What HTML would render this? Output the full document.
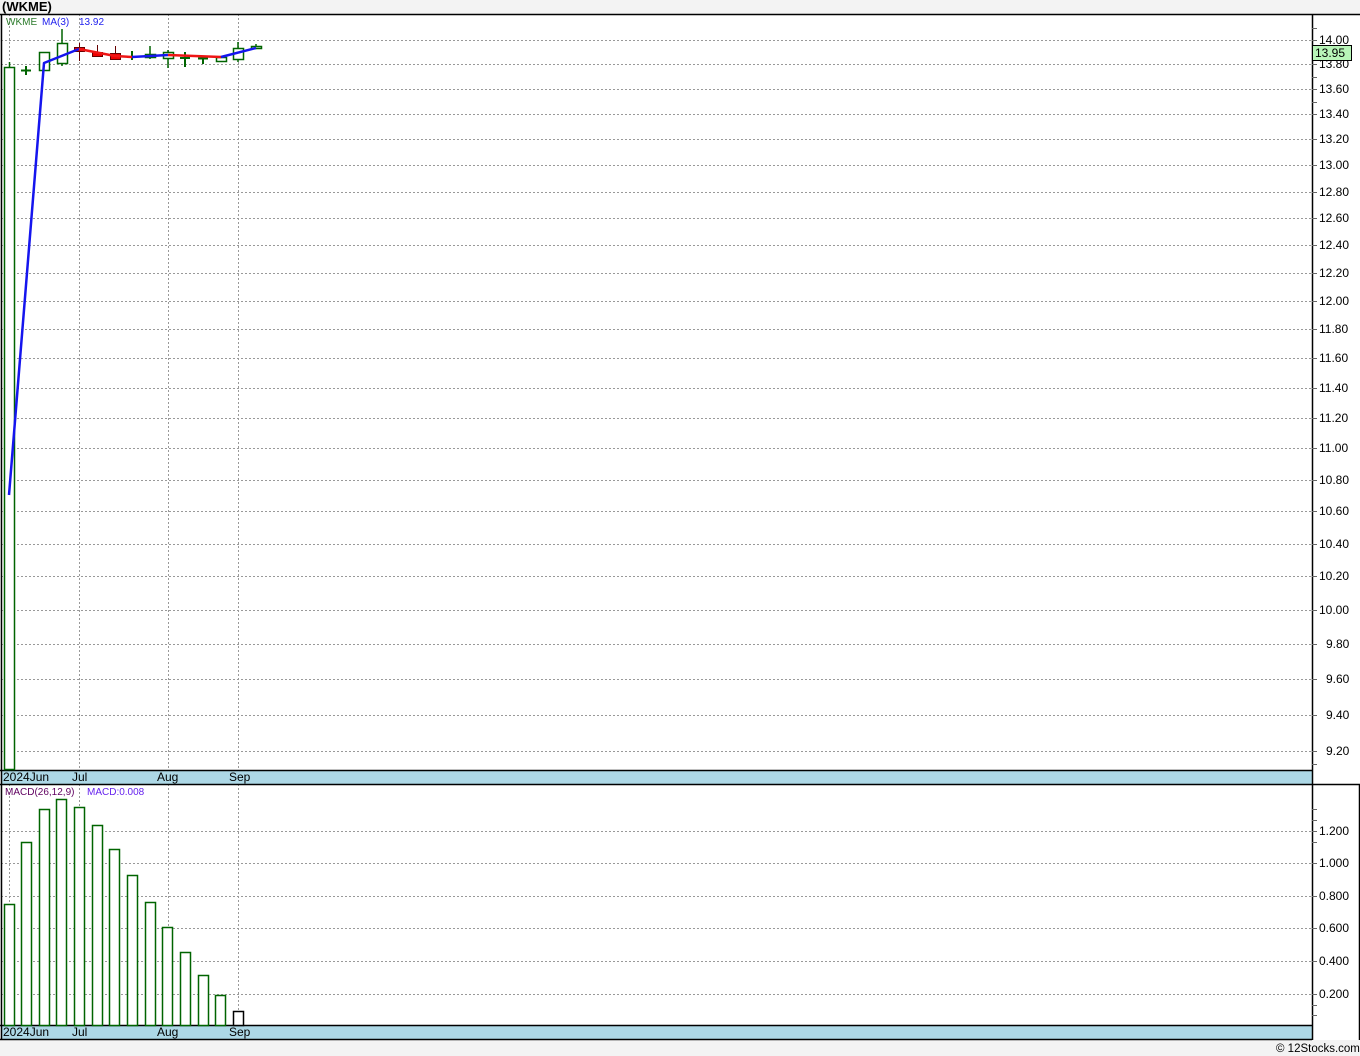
<!DOCTYPE html>
<html><head><meta charset="utf-8"><style>
html,body{margin:0;padding:0;background:#f3f3f3;width:1360px;height:1056px;overflow:hidden}
svg{display:block;font-family:"Liberation Sans",sans-serif}
</style></head><body>
<svg width="1360" height="1056" viewBox="0 0 1360 1056" xmlns="http://www.w3.org/2000/svg">
<rect x="0" y="0" width="1360" height="1056" fill="#f3f3f3"/>
<text x="2" y="11" font-size="13" font-weight="bold" fill="#000">(WKME)</text>
<rect x="1" y="14" width="1311" height="1025" fill="#fff"/>
<rect x="1312" y="14" width="48" height="1026" fill="#fff"/>
<g stroke="#999" stroke-width="1" stroke-dasharray="2,2" fill="none">
<path d="M1 40.5H1312M1 64.5H1312M1 89.5H1312M1 114.5H1312M1 139.5H1312M1 165.5H1312M1 192.5H1312M1 218.5H1312M1 245.5H1312M1 273.5H1312M1 301.5H1312M1 329.5H1312M1 358.5H1312M1 388.5H1312M1 418.5H1312M1 448.5H1312M1 480.5H1312M1 511.5H1312M1 544.5H1312M1 576.5H1312M1 610.5H1312M1 644.5H1312M1 679.5H1312M1 715.5H1312M1 751.5H1312"/>
<path d="M9.5 14V770M79.5 14V770M168.5 14V770M238.5 14V770"/>
<path d="M1 831.5H1312M1 863.5H1312M1 896.5H1312M1 928.5H1312M1 961.5H1312M1 994.5H1312"/>
<path d="M9.5 784V1025M79.5 784V1025M168.5 784V1025M238.5 784V1025"/>
</g>
<rect x="1" y="770" width="1311" height="14" fill="#add8e6"/>
<rect x="1" y="1025" width="1311" height="14" fill="#add8e6"/>
<g stroke="#000" stroke-width="1.5" fill="none">
<path d="M0 14.5H1360M1.5 14V1040M1312.5 14V1040M0 770.5H1312M0 784.5H1360M0 1025.5H1312M0 1039.5H1312M1359.5 784V1040"/>
</g>
<g font-size="12" fill="#000">
<text x="3" y="781">2024Jun</text><text x="72" y="781">Jul</text><text x="157" y="781">Aug</text><text x="229" y="781">Sep</text>
<text x="3" y="1036">2024Jun</text><text x="72" y="1036">Jul</text><text x="157" y="1036">Aug</text><text x="229" y="1036">Sep</text>
</g>
<g stroke="#666" stroke-width="1">
<path d="M1312 28.5h5M1312 40.5h5M1312 52.5h5M1312 64.5h5M1312 77.5h5M1312 89.5h5M1312 102.5h5M1312 114.5h5M1312 139.5h5M1312 165.5h5M1312 192.5h5M1312 218.5h5M1312 245.5h5M1312 273.5h5M1312 301.5h5M1312 329.5h5M1312 358.5h5M1312 388.5h5M1312 418.5h5M1312 448.5h5M1312 480.5h5M1312 511.5h5M1312 544.5h5M1312 576.5h5M1312 610.5h5M1312 644.5h5M1312 679.5h5M1312 715.5h5M1312 751.5h5M1312 764.5h5"/>
<path d="M1312 809.5h5M1312 820.5h5M1312 831.5h5M1312 842.5h5M1312 863.5h5M1312 896.5h5M1312 928.5h5M1312 961.5h5M1312 994.5h5M1312 1005.5h5M1312 1015.5h5"/>
</g>
<g font-size="12" fill="#000">
<text x="1319" y="44">14.00</text><text x="1319" y="68">13.80</text><text x="1319" y="93">13.60</text><text x="1319" y="118">13.40</text><text x="1319" y="143">13.20</text><text x="1319" y="169">13.00</text><text x="1319" y="196">12.80</text><text x="1319" y="222">12.60</text><text x="1319" y="249">12.40</text><text x="1319" y="277">12.20</text><text x="1319" y="305">12.00</text><text x="1319" y="333">11.80</text><text x="1319" y="362">11.60</text><text x="1319" y="392">11.40</text><text x="1319" y="422">11.20</text><text x="1319" y="452">11.00</text><text x="1319" y="484">10.80</text><text x="1319" y="515">10.60</text><text x="1319" y="548">10.40</text><text x="1319" y="580">10.20</text><text x="1319" y="614">10.00</text><text x="1326" y="648">9.80</text><text x="1326" y="683">9.60</text><text x="1326" y="719">9.40</text><text x="1326" y="755">9.20</text>
<text x="1319" y="835">1.200</text><text x="1319" y="867">1.000</text><text x="1319" y="900">0.800</text><text x="1319" y="932">0.600</text><text x="1319" y="965">0.400</text><text x="1319" y="998">0.200</text>
</g>
<rect x="1312.5" y="45.5" width="39" height="15" fill="#b8f5b8" stroke="#000"/>
<text x="1315" y="57" font-size="12" fill="#000">13.95</text>
<text x="6" y="25" font-size="10" fill="#2a7a2a">WKME</text>
<text x="42" y="25" font-size="10" fill="#2222ee">MA(3)</text>
<text x="79" y="25" font-size="10" fill="#2222ee">13.92</text>
<text x="5" y="795" font-size="10" fill="#600060">MACD(26,12,9)</text>
<text x="87" y="795" font-size="10" fill="#6622ee">MACD:0.008</text>
<g stroke="#006400" stroke-width="1.5" fill="#fff">
<path d="M9.5 62V67"/><rect x="4.5" y="67.5" width="10" height="702"/>
<path d="M26 66V75M21 70.5H31" stroke-width="2"/>
<rect x="39.5" y="52.5" width="10" height="18"/>
<path d="M62 29V43M62 63V66"/><rect x="57.5" y="43.5" width="10" height="20"/>
<path d="M132 51V60M127 57H137" stroke-width="2"/>
<path d="M150 46V54M150 57V59"/><rect x="145.5" y="54.5" width="10" height="3"/>
<path d="M168 50V52M168 58V68"/><rect x="163.5" y="52.5" width="10" height="6"/>
<path d="M185 52V67M180 58H190" stroke-width="2"/>
<path d="M203 56V64M198 58.5H208" stroke-width="2"/>
<rect x="216.5" y="57.5" width="10" height="4"/>
<path d="M238 42V48M238 59V62"/><rect x="233.5" y="48.5" width="10" height="11"/>
<path d="M256 44V49"/><rect x="251.5" y="46.5" width="10" height="2"/>
</g>
<g stroke="#600" stroke-width="1" fill="#e00">
<path d="M79.5 43V61M97.5 45V57M115.5 46V59"/>
<rect x="74.5" y="47.5" width="10" height="4"/>
<rect x="92.5" y="52.5" width="10" height="4"/>
<rect x="110.5" y="53.5" width="10" height="6"/>
</g>
<g fill="none" stroke-width="2.5" stroke-linejoin="round">
<path d="M9 495L44 63L79 49" stroke="#1515ee"/>
<path d="M79 49L115 56L132 57" stroke="#ee1515"/>
<path d="M132 57L168 55" stroke="#1515ee"/>
<path d="M168 55L221 57" stroke="#ee1515"/>
<path d="M221 57L256 48" stroke="#1515ee"/>
</g>
<g stroke="#006400" stroke-width="1.5" fill="#fff">
<rect x="4.5" y="904.5" width="10" height="121"/>
<rect x="21.5" y="842.5" width="10" height="183"/>
<rect x="39.5" y="809.5" width="10" height="216"/>
<rect x="56.5" y="799.5" width="10" height="226"/>
<rect x="74.5" y="807.5" width="10" height="218"/>
<rect x="92.5" y="825.5" width="10" height="200"/>
<rect x="109.5" y="849.5" width="10" height="176"/>
<rect x="127.5" y="875.5" width="10" height="150"/>
<rect x="145.5" y="902.5" width="10" height="123"/>
<rect x="162.5" y="927.5" width="10" height="98"/>
<rect x="180.5" y="952.5" width="10" height="73"/>
<rect x="198.5" y="975.5" width="10" height="50"/>
<rect x="215.5" y="995.5" width="10" height="30"/>
</g>
<rect x="233.5" y="1011.5" width="10" height="14" fill="#fff" stroke="#000" stroke-width="1.5"/>
<text x="1276" y="1052" font-size="11.5" fill="#000">© 12Stocks.com</text>
</svg>
</body></html>
